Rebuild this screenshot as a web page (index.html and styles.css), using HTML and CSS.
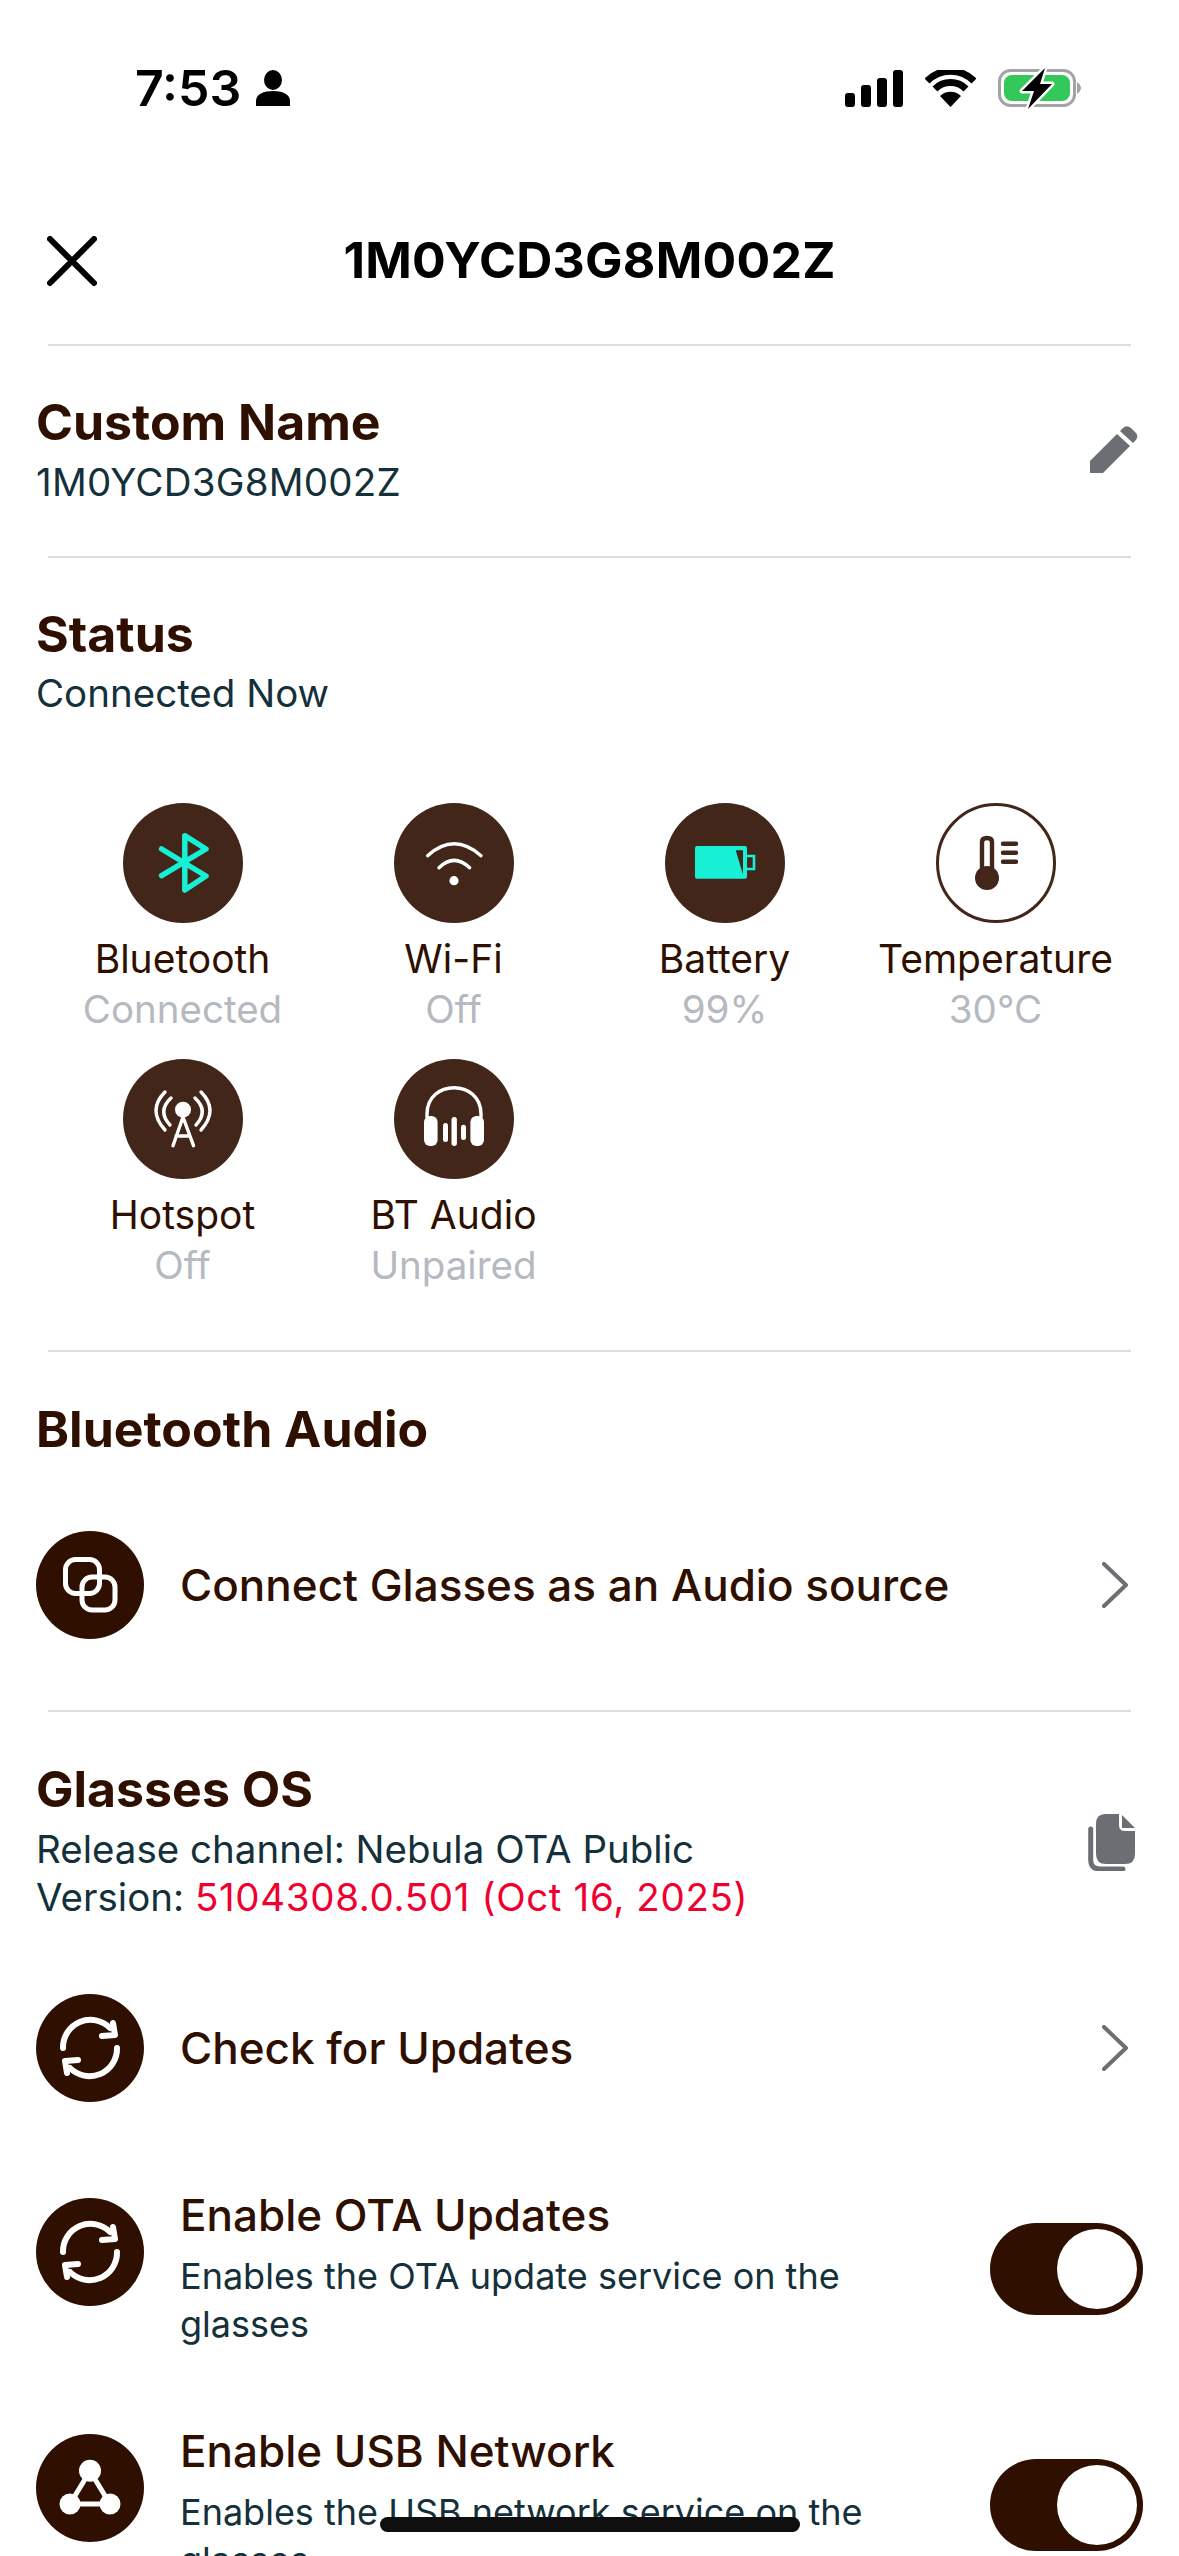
FILE: index.html
```html
<!DOCTYPE html>
<html lang="en">
<head>
    <meta charset="UTF-8">
    <meta name="viewport" content="width=device-width, initial-scale=1.0">
    <title>1M0YCD3G8M002Z</title>
    <link rel="stylesheet" href="styles.css">
</head>
<body>
    <div class="phone">
        <div class="statusbar">
            <div class="statusbar-left">
                <span class="clock">7:53</span>
                <svg class="person" viewBox="0 0 34 36"><ellipse cx="17" cy="10" rx="9" ry="10"/><path d="M0 36 V31 C0 24 8 21 17 21 C26 21 34 24 34 31 V36 Z"/></svg>
            </div>
            <div class="statusbar-right">
                <svg class="signal" viewBox="0 0 58 37"><rect x="0" y="23" width="10" height="14" rx="3"/><rect x="16" y="15" width="10" height="22" rx="3"/><rect x="32" y="8" width="10" height="29" rx="3"/><rect x="48" y="0" width="10" height="37" rx="3"/></svg>
                <svg class="wifi" viewBox="0 0 51 37"><path d="M25.5 37 L15 26 A15 15 0 0 1 36 26 Z"/><path class="wifi-arc" d="M10 19 A22 22 0 0 1 41 19"/><path class="wifi-arc" d="M2 11 A33 33 0 0 1 49 11"/></svg>
                <svg class="batt" viewBox="0 0 84 40"><rect x="2.5" y="2.5" width="75" height="35" rx="11" fill="none" stroke="#a3a3a3" stroke-width="3"/><path d="M80 14 Q84 17 84 20 Q84 23 80 26 Z" fill="#a3a3a3"/><rect x="7" y="7" width="66" height="26" rx="8" fill="#34c759"/><path d="M48 0 L25 23 H37 L31 41 L55 16 H43 Z" fill="#000" stroke="#fff" stroke-width="5" stroke-linejoin="round" paint-order="stroke"/></svg>
            </div>
        </div>

        <header class="topbar">
            <svg class="close" viewBox="0 0 50 50"><path d="M3 3 L47 47 M47 3 L3 47"/></svg>
            <h1>1M0YCD3G8M002Z</h1>
        </header>
        <div class="divider"></div>

        <section class="section name-section">
            <div>
                <h2>Custom Name</h2>
                <p class="sub serial">1M0YCD3G8M002Z</p>
            </div>
            <svg class="edit" viewBox="0 0 50 50"><path d="M1 37 L28 10 L41 22 L14 49 H1 Z"/><path d="M33 5 Q37 0 42 4 L47 9 Q50 13 46 17 L44 19 L31 7 Z"/></svg>
        </section>
        <div class="divider"></div>

        <section class="section status-section">
            <h2>Status</h2>
            <p class="sub">Connected Now</p>
            <div class="status-grid">
                <div class="status-item">
                    <div class="status-icon">
                        <svg viewBox="0 0 120 120"><path class="teal-line" d="M38.6 46 L83 73 L61.8 87 V32.7 L83 46 L38.6 72.7"/></svg>
                    </div>
                    <div class="status-label">Bluetooth</div>
                    <div class="status-value">Connected</div>
                </div>
                <div class="status-item">
                    <div class="status-icon">
                        <svg viewBox="0 0 120 120"><path class="white-line" d="M33.6 52.7 Q60 29 87 52.7"/><path class="white-line" d="M45 64.7 Q60 50 75.7 64.7"/><circle cx="60" cy="77.7" r="4.6" fill="#fff"/></svg>
                    </div>
                    <div class="status-label">Wi-Fi</div>
                    <div class="status-value">Off</div>
                </div>
                <div class="status-item">
                    <div class="status-icon">
                        <svg viewBox="0 0 120 120"><rect x="30" y="43" width="52" height="32.7" rx="2" fill="#17f0d4"/><path d="M70.7 47.3 H78 V71.7 Z" fill="#42261a"/><path d="M82 53 H89 V66 H82" fill="none" stroke="#17f0d4" stroke-width="2.6"/></svg>
                    </div>
                    <div class="status-label">Battery</div>
                    <div class="status-value">99%</div>
                </div>
                <div class="status-item">
                    <div class="status-icon outlined">
                        <svg viewBox="0 0 120 120"><circle cx="51" cy="75" r="12" fill="#42261a"/><path d="M46 70 V39 Q46 35 51 35 Q56 35 56 39 V70" fill="none" stroke="#42261a" stroke-width="4.4"/><path d="M67 40.7 H80 M67 49.7 H80 M67 58.7 H80" fill="none" stroke="#42261a" stroke-width="4.4" stroke-linecap="round"/></svg>
                    </div>
                    <div class="status-label">Temperature</div>
                    <div class="status-value">30°C</div>
                </div>
                <div class="status-item">
                    <div class="status-icon">
                        <svg viewBox="0 0 120 120"><circle cx="60" cy="50.7" r="8" fill="#fff"/><path class="white-line" d="M60 58 L50 86.7 M60 58 L70.5 86.7 M53 77 H67"/><path class="white-line" d="M42 33 Q24 51 42 71 M48 39 Q34 52 47 66 M78 33 Q96 51 78 71 M72 39 Q86 52 73 66"/></svg>
                    </div>
                    <div class="status-label">Hotspot</div>
                    <div class="status-value">Off</div>
                </div>
                <div class="status-item">
                    <div class="status-icon">
                        <svg viewBox="0 0 120 120"><path class="white-line" d="M33 58 V55 C33 20 87 20 87 55 V58"/><rect x="30" y="57" width="13.6" height="30" rx="6" fill="#fff"/><rect x="76.4" y="57" width="13.6" height="30" rx="6" fill="#fff"/><rect x="49" y="64" width="5" height="19" rx="2.5" fill="#fff"/><rect x="57.5" y="58" width="5.4" height="29" rx="2.7" fill="#fff"/><rect x="67" y="65.7" width="5" height="15.3" rx="2.5" fill="#fff"/></svg>
                    </div>
                    <div class="status-label">BT Audio</div>
                    <div class="status-value">Unpaired</div>
                </div>
            </div>
        </section>
        <div class="divider"></div>

        <section class="section audio-section">
            <h2>Bluetooth Audio</h2>
            <div class="row audio-row">
                <div class="row-icon">
                    <svg viewBox="0 0 108 108"><rect x="29.5" y="28.5" width="34" height="34" rx="10" class="white-line"/><rect x="46" y="46" width="33" height="33" rx="10" class="white-line"/></svg>
                </div>
                <div class="row-title">Connect Glasses as an Audio source</div>
                <svg class="chevron" viewBox="0 0 26 46"><path d="M2 2 L24 23 L2 44"/></svg>
            </div>
        </section>
        <div class="divider"></div>

        <section class="section os-section">
            <div class="os-head">
                <div>
                    <h2>Glasses OS</h2>
                    <p class="sub os-line">Release channel: Nebula OTA Public</p>
                    <p class="sub os-line">Version: <span class="version">5104308.0.501 (Oct 16, 2025)</span></p>
                </div>
                <svg class="copy" viewBox="0 0 48 57"><path class="copy-fill" d="M17 0 H31 V11 Q31 17 37 17 H47 V40 Q47 50 37 50 H18 Q8 50 8 40 V10 Q8 0 17 0 Z"/><path class="copy-fill" d="M34 1 L47 14 H34 Z"/><path class="copy-back" d="M2.7 15 V46 Q2.7 55 12 55 H35"/></svg>
            </div>
            <div class="row check-row">
                <div class="row-icon">
                    <svg viewBox="0 0 108 108"><path class="white-line sync" d="M27 54 A27.5 27.5 0 0 1 74 34"/><path class="white-line sync" d="M77 29 L79 41 L66 42"/><path class="white-line sync" d="M81 54 A27.5 27.5 0 0 1 34 74"/><path class="white-line sync" d="M31 79 L29 67 L42 66"/></svg>
                </div>
                <div class="row-title">Check for Updates</div>
                <svg class="chevron" viewBox="0 0 26 46"><path d="M2 2 L24 23 L2 44"/></svg>
            </div>
            <div class="row toggle-row">
                <div class="row-icon">
                    <svg viewBox="0 0 108 108"><path class="white-line sync" d="M27 54 A27.5 27.5 0 0 1 74 34"/><path class="white-line sync" d="M77 29 L79 41 L66 42"/><path class="white-line sync" d="M81 54 A27.5 27.5 0 0 1 34 74"/><path class="white-line sync" d="M31 79 L29 67 L42 66"/></svg>
                </div>
                <div class="row-text">
                    <div class="row-title">Enable OTA Updates</div>
                    <p class="sub">Enables the OTA update service on the glasses</p>
                </div>
                <div class="toggle"><div class="knob"></div></div>
            </div>
            <div class="row toggle-row">
                <div class="row-icon">
                    <svg viewBox="0 0 108 108"><path class="white-line" d="M54 37 L34 70 H74 Z"/><circle cx="54" cy="36.7" r="11" fill="#fff"/><circle cx="34" cy="70" r="10.5" fill="#fff"/><circle cx="74" cy="70" r="10.5" fill="#fff"/></svg>
                </div>
                <div class="row-text">
                    <div class="row-title">Enable USB Network</div>
                    <p class="sub">Enables the USB network service on the glasses</p>
                </div>
                <div class="toggle"><div class="knob"></div></div>
            </div>
        </section>

        <div class="home-indicator"></div>
    </div>
</body>
</html>
```

FILE: styles.css
```css
html, body {
    margin: 0;
    padding: 0;
    background-color: #fff;
}
body {
    font-family: 'Inter', sans-serif;
    color: #2e0f00;
}
h1, h2, p {
    margin: 0;
}
.phone {
    position: relative;
    width: 1179px;
    height: 2556px;
    overflow: hidden;
    background-color: #fff;
}

/* status bar */
.statusbar {
    height: 200px;
    box-sizing: border-box;
    padding: 63px 98px 0 135px;
    display: flex;
    justify-content: space-between;
    align-items: flex-start;
}
.statusbar-left {
    display: flex;
    align-items: center;
    gap: 15px;
    height: 50px;
}
.clock {
    font-size: 50px;
    font-weight: 600;
    line-height: 50px;
    color: #000;
}
.person {
    width: 34px;
    height: 36px;
    fill: #000;
}
.statusbar-right {
    display: flex;
    align-items: center;
    height: 50px;
}
.signal {
    width: 58px;
    height: 37px;
    fill: #000;
    margin-right: 22px;
}
.wifi {
    width: 51px;
    height: 37px;
    fill: #000;
    margin-right: 21px;
}
.wifi-arc {
    fill: none;
    stroke: #000;
    stroke-width: 7;
}
.batt {
    width: 84px;
    height: 40px;
    overflow: visible;
}

/* header */
.topbar {
    position: relative;
    height: 120px;
    margin-bottom: 24px;
    display: flex;
    align-items: center;
    justify-content: center;
}
.topbar h1 {
    font-size: 50px;
    font-weight: 700;
    letter-spacing: 0.25px;
    color: #000;
}
.close {
    position: absolute;
    left: 47px;
    top: 36px;
    width: 50px;
    height: 50px;
    fill: none;
    stroke: #000;
    stroke-width: 6;
    stroke-linecap: round;
}
.divider {
    height: 2px;
    margin: 0 48px;
    background-color: #dcdcdc;
}

/* sections */
.section {
    padding: 46px 36px 0;
}
h2 {
    font-size: 50px;
    font-weight: 700;
    line-height: 60px;
    color: #2e0f00;
}
.sub {
    font-size: 38.5px;
    line-height: 48px;
    color: #14303a;
}
.serial {
    letter-spacing: 0.25px;
}
.name-section {
    display: flex;
    justify-content: space-between;
    align-items: center;
    padding-bottom: 50px;
}
.name-section .sub {
    margin-top: 6px;
}
.edit {
    width: 50px;
    height: 50px;
    fill: #6b6e73;
    margin-right: 4px;
}

/* status grid */
.status-section {
    padding: 46px 48px 60px 36px;
}
.status-section .sub {
    margin-top: 5px;
}
.status-grid {
    margin-top: 86px;
    margin-left: 11px;
    display: grid;
    grid-template-columns: repeat(4, 271px);
    row-gap: 25px;
}
.status-item {
    display: flex;
    flex-direction: column;
    align-items: center;
}
.status-icon {
    width: 120px;
    height: 120px;
    border-radius: 50%;
    background-color: #42261a;
    margin-bottom: 11px;
}
.status-icon svg {
    display: block;
    width: 120px;
    height: 120px;
}
.status-icon.outlined {
    box-sizing: border-box;
    background-color: #fff;
    border: 3px solid #42261a;
}
.status-icon.outlined svg {
    margin: -3px;
}
.teal-line {
    fill: none;
    stroke: #17f0d4;
    stroke-width: 5.5;
    stroke-linecap: round;
    stroke-linejoin: round;
}
.white-line {
    fill: none;
    stroke: #fff;
    stroke-width: 3.4;
    stroke-linecap: round;
    stroke-linejoin: round;
}
.status-label {
    font-size: 39px;
    line-height: 50px;
    color: #2e0f00;
}
.status-value {
    font-size: 38.5px;
    line-height: 50px;
    color: #b5b9c0;
}

/* list rows */
.row {
    display: flex;
    align-items: center;
}
.row-icon {
    flex: none;
    width: 108px;
    height: 108px;
    margin-right: 36px;
    border-radius: 50%;
    background-color: #2e0f00;
}
.row-icon svg {
    display: block;
    width: 108px;
    height: 108px;
}
.row-icon .white-line {
    stroke-width: 5;
}
.row-icon .white-line.sync {
    stroke-width: 6;
}
.row-title {
    flex: 1;
    font-size: 44px;
    font-weight: 500;
    line-height: 60px;
    color: #2e0f00;
}
.chevron {
    flex: none;
    width: 26px;
    height: 46px;
    margin-right: 15px;
    fill: none;
    stroke: #6b6e73;
    stroke-width: 4;
    stroke-linecap: round;
    stroke-linejoin: round;
}
.audio-section {
    padding-top: 47px;
    padding-bottom: 71px;
}
.audio-row {
    margin-top: 72px;
}
.os-section {
    padding-top: 47px;
}
.os-head {
    display: flex;
    justify-content: space-between;
    align-items: center;
}
.os-line:first-of-type {
    margin-top: 6px;
}
.version {
    letter-spacing: 0.65px;
    color: #f0002f;
}
.copy {
    width: 48px;
    height: 57px;
    margin-right: 7px;
    margin-top: 4px;
}
.copy-fill {
    fill: #6b6e73;
}
.copy-back {
    fill: none;
    stroke: #6b6e73;
    stroke-width: 5;
    stroke-linecap: round;
}
.check-row {
    margin-top: 73px;
    margin-bottom: 83px;
}
.toggle-row {
    margin-bottom: 73px;
}
.toggle-row .row-icon {
    align-self: flex-start;
    margin-top: 13px;
}
.row-text {
    flex: 1;
    margin-right: 30px;
}
.toggle-row .sub {
    margin-top: 7px;
    font-size: 36px;
}
.toggle {
    flex: none;
    width: 153px;
    height: 92px;
    margin-top: 5px;
    box-sizing: border-box;
    padding: 6px;
    display: flex;
    justify-content: flex-end;
    border-radius: 46px;
    background-color: #2e0f00;
}
.knob {
    width: 80px;
    height: 80px;
    border-radius: 50%;
    background-color: #fff;
}

.home-indicator {
    position: absolute;
    left: 380px;
    top: 2517px;
    width: 420px;
    height: 15px;
    border-radius: 8px;
    background-color: #0f0f0f;
}
```
